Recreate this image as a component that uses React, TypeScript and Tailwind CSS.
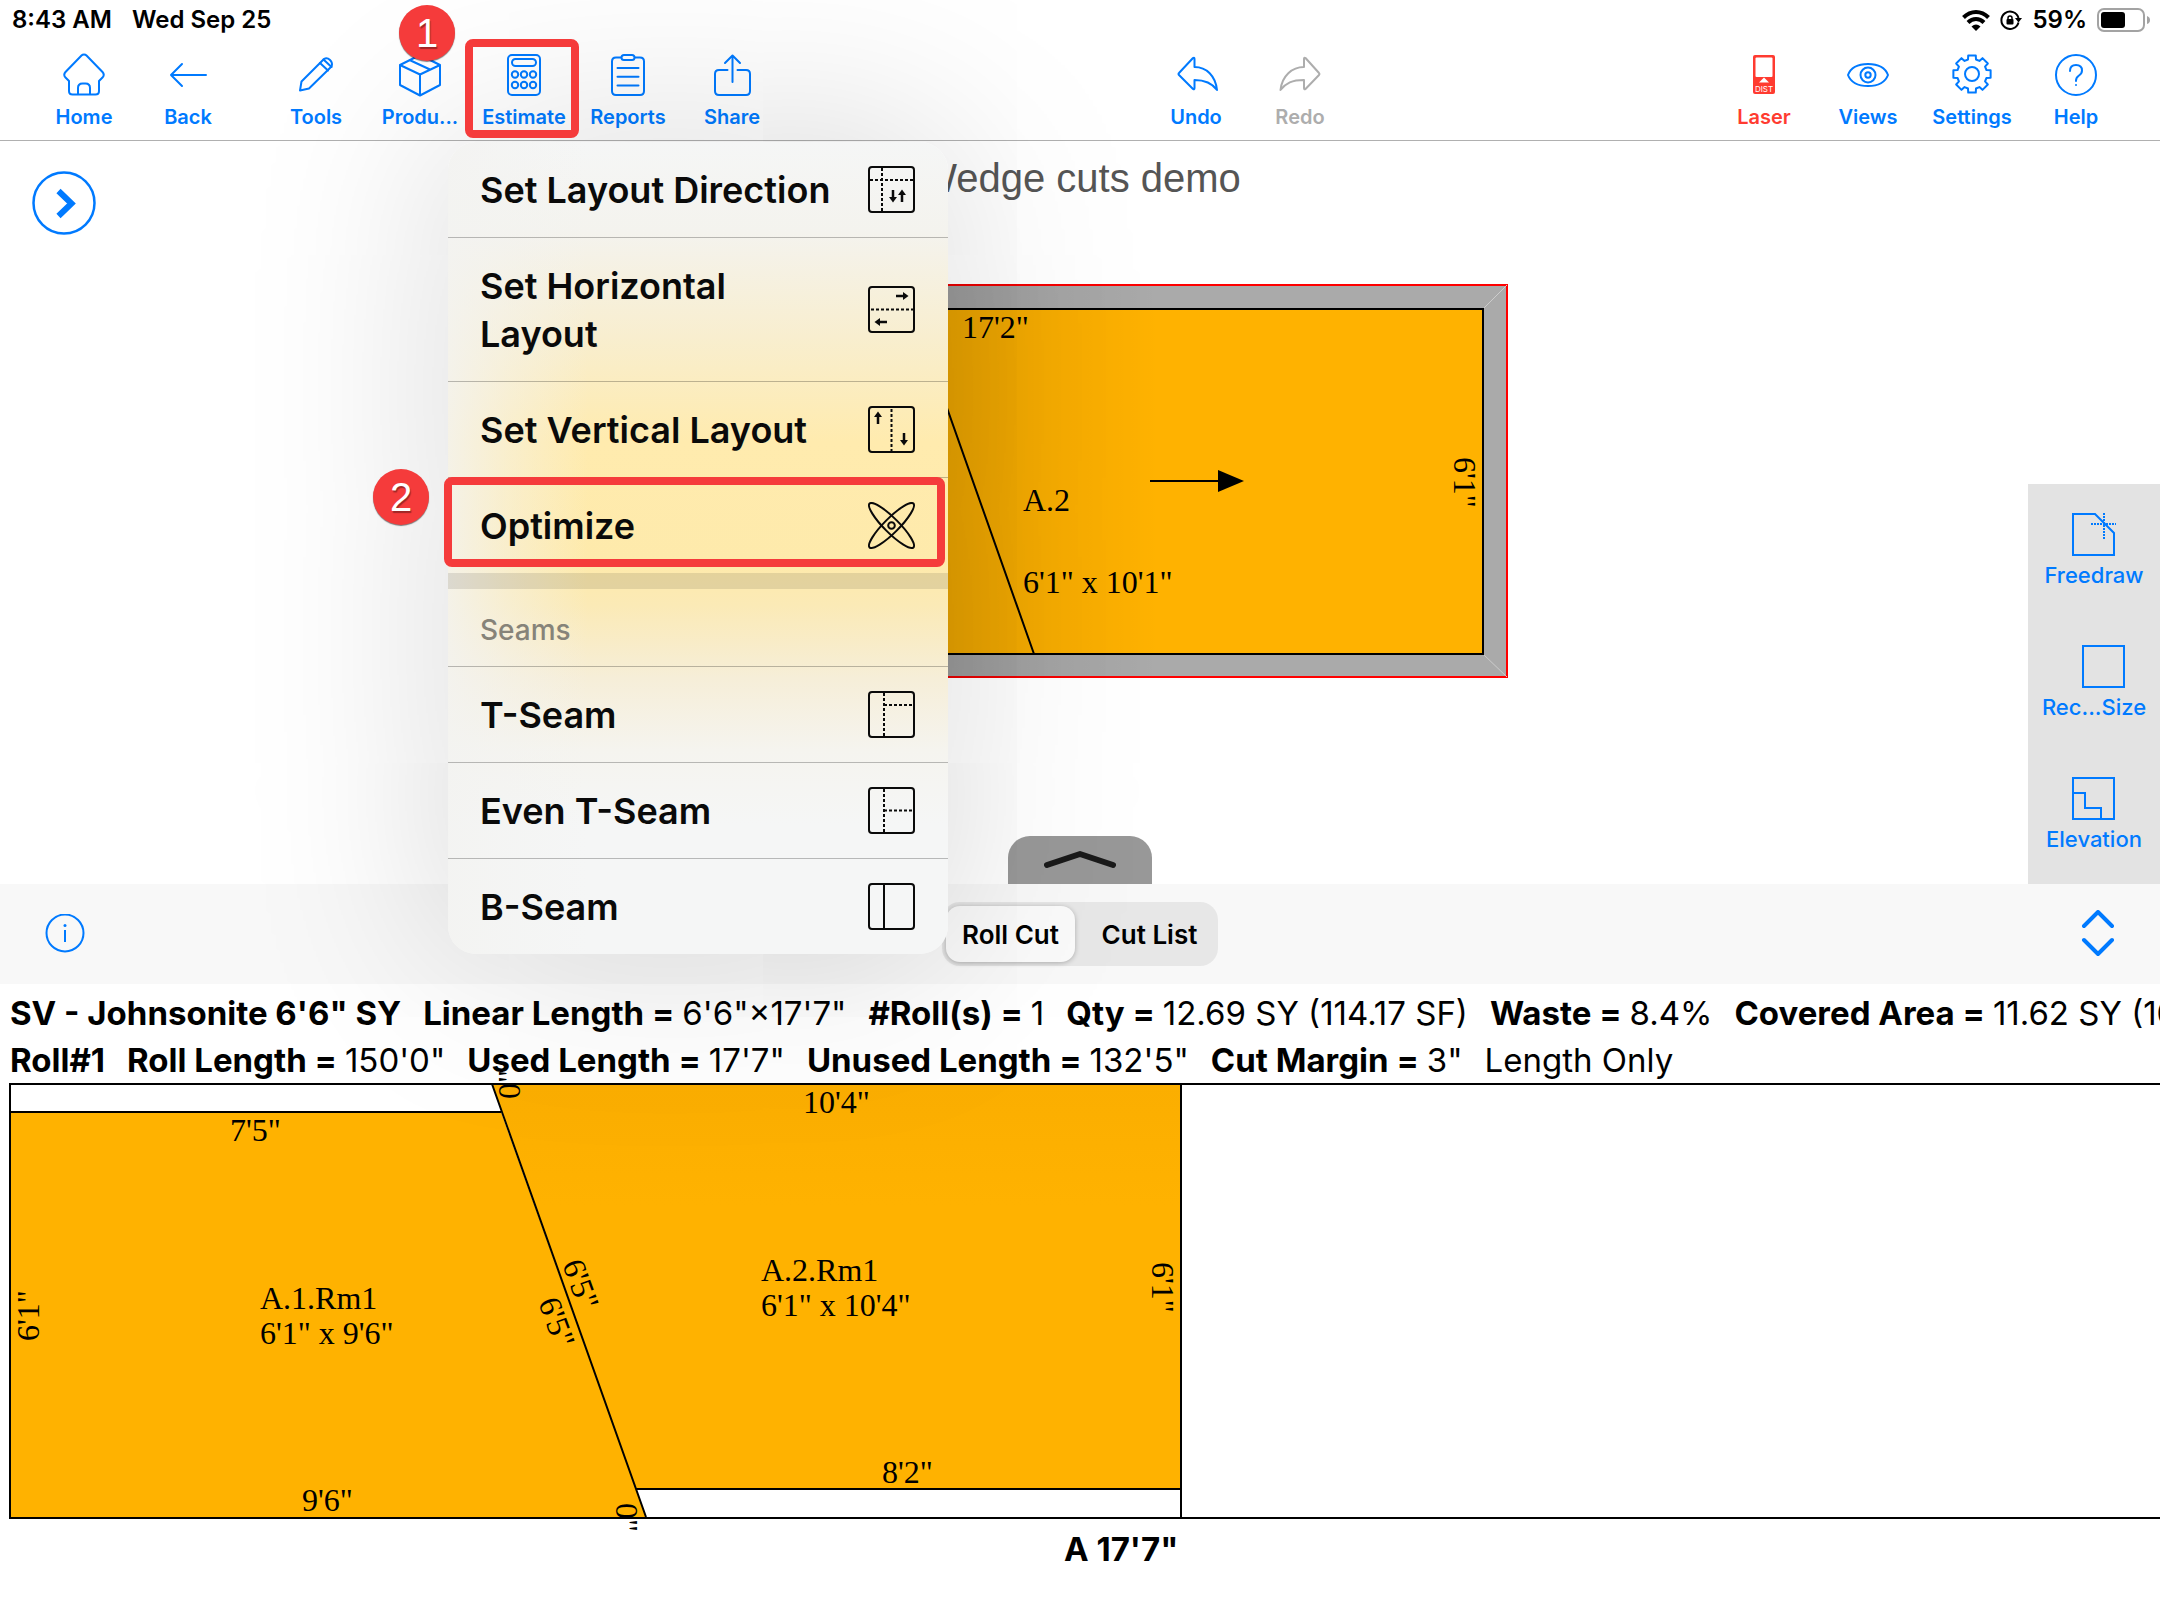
import React, { useState } from 'react';

interface IconProps {
    children: React.ReactNode;
    className?: string;
}

const ToolIcon: React.FC<IconProps> = ({ children, className = '' }) => (
    <svg
        viewBox="0 0 42 42"
        className={`h-[42px] w-[42px] overflow-visible ${className}`}
        fill="none"
        stroke="currentColor"
        strokeWidth="2"
        strokeLinejoin="round"
        strokeLinecap="round"
    >
        {children}
    </svg>
);

// Eight-toothed gear outline centred on 21,20
const gearPath = () => {
    const points: string[] = [];
    for (let i = 0; i < 8; i++) {
        const mid = (i * Math.PI) / 4 - Math.PI / 2;
        const corners = [[15, -0.27], [19, -0.2], [19, 0.2], [15, 0.27]];
        corners.forEach(([r, a]) => {
            points.push(`${(21 + r * Math.cos(mid + a)).toFixed(2)} ${(20 + r * Math.sin(mid + a)).toFixed(2)}`);
        });
    }
    return `M${points.join('L')}Z`;
};

const HomeIcon = () => (
    <ToolIcon>
        <path d="M21 .5q-1.500 0-2.500 1L2.500 18q-2.500 3 0 5.500L6 27v10q0 3.500 3.500 3.500h23q3.500 0 3.500-3.500V27l3.500-3.500q2.500-2.500 0-5.500l-16-16.500q-1-1-2.500-1z" />
        <path d="M15 40v-6q0-4.500 4.500-4.500h3q4.500 0 4.500 4.500v6" />
    </ToolIcon>
);

const BackIcon = () => (
    <ToolIcon>
        <path d="M4 21h35M15 10L4 21l11 11" />
    </ToolIcon>
);

const PencilIcon = () => (
    <ToolIcon>
        <path d="M5 36.500l1.500-9L29 5q3-2 6 1t1.500 6.500L14 34.500z" />
        <path d="M25 9l8 7.500M28.500 5.500l8 7.500" />
    </ToolIcon>
);

const BoxIcon = () => (
    <ToolIcon>
        <path d="M21 1l20 10v20L21 41.500 1 31V11zM1 11l20 9.500L41 11M21 20.500v21M10.500 6L31 15.500" />
    </ToolIcon>
);

const CalculatorIcon = () => (
    <ToolIcon>
        <rect x="5" y="1" width="32" height="40" rx="4" />
        <rect x="9" y="5" width="24" height="7" rx="3.500" />
        {[12, 21, 30].map((x) => (
            <React.Fragment key={x}>
                <circle cx={x} cy="20.500" r="3.200" />
                <circle cx={x} cy="31" r="3.200" />
            </React.Fragment>
        ))}
    </ToolIcon>
);

const ReportsIcon = () => (
    <ToolIcon>
        <path d="M14 3.500H9q-4 0-4 4V37q0 4 4 4h24q4 0 4-4V7.500q0-4-4-4h-5" />
        <rect x="14.500" y="1" width="13" height="5" rx="2.500" />
        <path d="M10.500 14h21M10.500 22.700h21M10.500 31.500h21" />
    </ToolIcon>
);

const ShareIcon = () => (
    <ToolIcon>
        <path d="M16.500 16H8q-4 0-4 4v17q0 4 4 4h27q4 0 4-4V20q0-4-4-4h-8.500M21.500 28V1.500M14 9l7.500-7.500L29 9" />
    </ToolIcon>
);

const UndoIcon = () => (
    <ToolIcon>
        <path d="M4 19L18 4q1.500-1 1.500 1v8c12 0 21 9 22.500 23-5-7-11.500-10-22.500-10v8q0 2-1.500 1L4 21q-1-1 0-2z" />
    </ToolIcon>
);

const RedoIcon = () => (
    <ToolIcon>
        <path d="M40 19L26.500 4q-1.500-1-1.500 1v8C13 13 3 22 1.500 36 7 29 13 26 25 26v8q0 2 1.500 1L40 21q1-1 0-2z" />
    </ToolIcon>
);

const LaserIcon = () => (
    <ToolIcon>
        <rect x="10" y="1" width="22" height="39" rx="2" fill="currentColor" stroke="none" />
        <rect x="12.500" y="3.500" width="17" height="19.500" rx="1" fill="#fff" stroke="none" />
        <path d="M16 28.500l5-5 5 5z" fill="#fff" stroke="none" />
        <text x="21" y="37.500" fontSize="8" textAnchor="middle" fill="#fff" stroke="none">DIST</text>
    </ToolIcon>
);

const ViewsIcon = () => (
    <ToolIcon>
        <path d="M1 21C4 13 12 10 21 10s17 3 20 11c-3 8-11 11-20 11S4 29 1 21z" />
        <circle cx="21" cy="21" r="7.500" />
        <circle cx="21" cy="21" r="2.700" />
    </ToolIcon>
);

const SettingsIcon = () => (
    <ToolIcon>
        <path d={gearPath()} />
        <circle cx="21" cy="20" r="7" />
    </ToolIcon>
);

const HelpIcon = () => (
    <ToolIcon>
        <circle cx="21" cy="21" r="20" />
        <path d="M15 17q0-6 6-6t6 5.500q0 3-3 5t-3 5v.5" />
        <circle cx="21" cy="31" r="1" fill="currentColor" stroke="none" />
    </ToolIcon>
);

interface ToolButtonProps {
    label: string;
    icon: React.ReactNode;
    color?: string;
    disabled?: boolean;
}

const ToolButton: React.FC<ToolButtonProps> = ({ label, icon, color = 'text-[#007aff]', disabled }) => (
    <button disabled={disabled} className={`flex w-[104px] flex-col items-center gap-[9px] pt-[14px] ${color}`}>
        {icon}
        <span className="text-[20px] leading-6 font-semibold">{label}</span>
    </button>
);

const MenuIcon: React.FC<{ children?: React.ReactNode; framed?: boolean }> = ({ children, framed = true }) => (
    <svg viewBox="0 0 48 48" className="h-12 w-12 shrink-0" fill="none" stroke="currentColor" strokeWidth="2">
        {framed && <rect x="1" y="1" width="45" height="45" rx="3" />}
        {children}
    </svg>
);

const Arrow: React.FC<{ x: number; y: number; angle: number }> = ({ x, y, angle }) => (
    <g transform={`translate(${x} ${y}) rotate(${angle})`}>
        <path d="M-6 0H3" strokeWidth="2.500" />
        <path d="M1-4l5.500 4L1 4z" fill="currentColor" stroke="none" />
    </g>
);

const MenuItem: React.FC<{ label: string; icon: React.ReactNode; last?: boolean; children?: React.ReactNode }> = ({
    label,
    icon,
    last,
    children,
}) => (
    <li className={`relative ${last ? '' : 'border-b border-black/25'}`}>
        <button role="menuitem" className="flex w-full items-center justify-between px-8 pt-6 pb-[23px] text-left">
            <span className="max-w-[366px] text-[36px] leading-[48px] font-semibold">{label}</span>
            {icon}
        </button>
        {children}
    </li>
);

const Marker: React.FC<{ label: string; className: string }> = ({ label, className }) => (
    <span
        className={`absolute z-30 flex h-14 w-14 items-center justify-center rounded-full bg-[#f53b3b] font-['Liberation_Sans',sans-serif] text-[40px] leading-none text-white shadow-[0_1px_1px_rgba(0,0,0,0.5)] [text-shadow:1px_2px_1px_rgba(0,0,0,0.35)] ${className}`}
    >
        {label}
    </span>
);

const EstimateMenu = () => (
    <div
        role="menu"
        className="absolute top-[102px] -left-6 z-20 w-[500px] rounded-[28px] bg-[linear-gradient(to_right,rgba(243,243,241,0.85),rgba(243,243,241,0.45)_12%,rgba(243,243,241,0)_28%),linear-gradient(to_bottom,#f5f6f6,#f4f3ee_11%,#f8eecf_24%,#ffebae_37%,#feeaab_52%,#fbeab6_57%,#f6eed8_66%,#f5f4ef_75%,#f5f6f6_84%)] text-[#0a0a0a] shadow-[0_0_200px_rgba(0,0,0,0.17)]"
    >
        <ul>
            <MenuItem
                label="Set Layout Direction"
                icon={
                    <MenuIcon>
                        <path d="M14 2v44M2 14h44" strokeDasharray="3 2" />
                        <Arrow x={25} y={30} angle={90} />
                        <Arrow x={34} y={30} angle={-90} />
                    </MenuIcon>
                }
            />
            <MenuItem
                label="Set Horizontal Layout"
                icon={
                    <MenuIcon>
                        <path d="M3 23.500h42" strokeDasharray="3 2" />
                        <Arrow x={34} y={10} angle={0} />
                        <Arrow x={13} y={36} angle={180} />
                    </MenuIcon>
                }
            />
            <MenuItem
                label="Set Vertical Layout"
                icon={
                    <MenuIcon>
                        <path d="M23.500 3v42" strokeDasharray="3 2" />
                        <Arrow x={10} y={12} angle={-90} />
                        <Arrow x={36} y={33} angle={90} />
                    </MenuIcon>
                }
            />
            <MenuItem
                label="Optimize"
                last
                icon={
                    <MenuIcon framed={false}>
                        <ellipse cx="23.500" cy="23.500" rx="31" ry="7.300" transform="rotate(45 23.500 23.500)" />
                        <ellipse cx="23.500" cy="23.500" rx="31" ry="7.300" transform="rotate(-45 23.500 23.500)" />
                        <circle cx="23.500" cy="23.500" r="3.300" />
                    </MenuIcon>
                }
            >
                <span className="pointer-events-none absolute -top-px -left-1 h-[90px] w-[501px] rounded-lg border-8 border-[#f53b3b]" />
                <Marker label="2" className="-top-[9px] -left-[75px]" />
            </MenuItem>
        </ul>
        <div className="h-4 bg-black/10" />
        <h2 className="border-b border-black/25 px-8 pt-[23px] pb-[18px] text-[28px] leading-9 font-medium text-[#868379]">Seams</h2>
        <ul>
            <MenuItem
                label="T-Seam"
                icon={
                    <MenuIcon>
                        <path d="M16 2v44M16 14h30" strokeDasharray="3 2" />
                    </MenuIcon>
                }
            />
            <MenuItem
                label="Even T-Seam"
                icon={
                    <MenuIcon>
                        <path d="M16 2v44M16 23.500h30" strokeDasharray="3 2" />
                    </MenuIcon>
                }
            />
            <MenuItem
                label="B-Seam"
                last
                icon={
                    <MenuIcon>
                        <path d="M16 1v45" />
                    </MenuIcon>
                }
            />
        </ul>
    </div>
);

const StatusBar = () => (
    <div className="flex h-10 items-center justify-between pr-[10px] pl-3 text-[24px] leading-none font-semibold text-black">
        <div className="flex gap-5">
            <span>8:43 AM</span>
            <span>Wed Sep 25</span>
        </div>
        <div className="flex items-center gap-[10px]">
            <svg viewBox="0 0 28 21" className="h-[21px] w-7" fill="none" stroke="currentColor" strokeWidth="4">
                <path d="M1.500 7.500Q7 2 14 2t12.500 5.500M6 12.500Q9.500 9 14 9t8 3.500" />
                <path d="M9.500 16.500Q14 12.500 18.500 16.500L14 21z" fill="currentColor" stroke="none" />
            </svg>
            <svg viewBox="0 0 22 20" className="h-5 w-[22px]" fill="none" stroke="currentColor" strokeWidth="2">
                <path d="M18.500 12.500A8.700 8.700 0 1 1 18.500 8" />
                <path d="M15 8h7l-3.500 4.500z" fill="currentColor" stroke="none" />
                <rect x="6.500" y="9" width="7" height="5.500" rx="1" fill="currentColor" stroke="none" />
                <path d="M8 9.500V8q0-2 2-2t2 2v1.500" strokeWidth="1.500" />
            </svg>
            <span>59%</span>
            <svg viewBox="0 0 53 24" className="h-6 w-[53px]">
                <rect x="1" y="1" width="46" height="22" rx="6" fill="none" stroke="#a3a3a3" strokeWidth="2" />
                <rect x="4" y="4" width="24" height="16" rx="3" fill="#000" />
                <path d="M50 8q3 1 3 4t-3 4z" fill="#a3a3a3" />
            </svg>
        </div>
    </div>
);

const Header = () => (
    <header className="border-b border-[#b0b0b0]">
        <StatusBar />
        <nav className="flex h-[100px] items-start justify-between px-8">
            <div className="flex gap-6">
                <div className="flex">
                    <ToolButton label="Home" icon={<HomeIcon />} />
                    <ToolButton label="Back" icon={<BackIcon />} />
                </div>
                <div className="flex">
                    <ToolButton label="Tools" icon={<PencilIcon />} />
                    <ToolButton label="Produ..." icon={<BoxIcon />} />
                    <div className="relative">
                        <ToolButton label="Estimate" icon={<CalculatorIcon />} />
                        <EstimateMenu />
                        <span className="pointer-events-none absolute -top-px -left-[7px] z-30 h-[99px] w-[114px] rounded-lg border-8 border-[#f53b3b]" />
                        <Marker label="1" className="-top-[35px] -left-[73px]" />
                    </div>
                    <ToolButton label="Reports" icon={<ReportsIcon />} />
                    <ToolButton label="Share" icon={<ShareIcon />} />
                </div>
            </div>
            <div className="flex">
                <ToolButton label="Undo" icon={<UndoIcon />} />
                <ToolButton label="Redo" icon={<RedoIcon />} color="text-[#adadad]" disabled />
            </div>
            <div className="flex">
                <ToolButton label="Laser" icon={<LaserIcon />} color="text-[#ff3b30]" />
                <ToolButton label="Views" icon={<ViewsIcon />} />
                <ToolButton label="Settings" icon={<SettingsIcon />} />
                <ToolButton label="Help" icon={<HelpIcon />} />
            </div>
        </nav>
    </header>
);

const RoomPlan = () => (
    <svg className="absolute inset-0 h-full w-full font-['Liberation_Serif',serif] text-[32px]">
        <defs>
            <linearGradient id="shade" gradientUnits="userSpaceOnUse" x1="948" y1="0" x2="1160" y2="0">
                <stop offset="0" stopOpacity="0.11" />
                <stop offset="0.5" stopOpacity="0.04" />
                <stop offset="1" stopOpacity="0" />
            </linearGradient>
        </defs>
        <rect x="486" y="144" width="1021" height="392" fill="#aaaaaa" stroke="#ff0000" strokeWidth="2" />
        <path d="M1483 168l24-24M1483 513l24 23" stroke="#cccccc" />
        <rect x="510" y="168" width="973" height="345" fill="#ffb200" stroke="#000" strokeWidth="2" />
        <path d="M912 168l122 345M1150 340h70" stroke="#000" strokeWidth="2" />
        <path d="M1218 329l26 11-26 11z" />
        <text x="962" y="197">17'2"</text>
        <text x="1023" y="370">A.2</text>
        <text x="1023" y="452">6'1" x 10'1"</text>
        <text transform="translate(1454 316) rotate(90)">6'1"</text>
        <rect x="948" y="143" width="212" height="394" fill="url(#shade)" />
    </svg>
);

const SidePanel = () => (
    <aside className="absolute right-0 bottom-0 flex h-[400px] w-[132px] flex-col gap-14 bg-[#e3e3e3] pt-[29px] text-[#007aff]">
        <button className="flex flex-col items-center">
            <svg viewBox="0 0 44 44" className="h-11 w-11" fill="none" stroke="currentColor" strokeWidth="2">
                <path d="M1 1h22l19 19v22H1z" />
                <path d="M19 11h25M32 0v26" strokeDasharray="2 1" />
            </svg>
            <span className="mt-1 text-[22px] leading-7 font-medium whitespace-nowrap">Freedraw</span>
        </button>
        <button className="flex flex-col items-center">
            <svg viewBox="0 0 64 44" className="h-11 w-16" fill="none" stroke="currentColor" strokeWidth="2">
                <rect x="21" y="1" width="41" height="41" />
            </svg>
            <span className="mt-1 text-[22px] leading-7 font-medium whitespace-nowrap">Rec...Size</span>
        </button>
        <button className="flex flex-col items-center">
            <svg viewBox="0 0 44 44" className="h-11 w-11" fill="none" stroke="currentColor" strokeWidth="2">
                <path d="M1 1h41v41H1zM1 16h12v15h16v11" />
            </svg>
            <span className="mt-1 text-[22px] leading-7 font-medium whitespace-nowrap">Elevation</span>
        </button>
    </aside>
);

const Canvas = () => (
    <main className="relative h-[743px] px-8 pt-[15px]">
        <RoomPlan />
        <h1 className="text-center font-['Liberation_Sans',sans-serif] text-[40px] leading-[44px] text-[#555555]">Wedge cuts demo</h1>
        <button aria-label="Expand" className="absolute top-[30px] left-8 text-[#007aff]">
            <svg viewBox="0 0 64 64" className="h-16 w-16" fill="none" stroke="currentColor">
                <circle cx="32" cy="32" r="30.500" strokeWidth="2.500" />
                <path d="M26.500 20L39.500 32.500 26.500 45" strokeWidth="6" />
            </svg>
        </button>
        <div className="absolute inset-x-0 bottom-0 flex justify-center">
            <button aria-label="Expand panel" className="flex h-12 w-36 justify-center rounded-t-[22px] bg-[#989898] pt-[14px]">
                <svg viewBox="0 0 72 20" className="h-5 w-[72px]" fill="none" stroke="#1a1a1a" strokeWidth="6" strokeLinecap="round" strokeLinejoin="round">
                    <path d="M3 15L36 4l33 11" />
                </svg>
            </button>
        </div>
        <SidePanel />
    </main>
);

const tabs = ['Roll Cut', 'Cut List'];

const ControlBar = () => {
    const [active, setActive] = useState('Roll Cut');

    return (
        <div className="flex h-[100px] items-center justify-between bg-[#f8f8f8] px-[45px] text-[#007aff]">
            <button aria-label="Info">
                <svg viewBox="0 0 40 40" className="h-10 w-10" fill="none" stroke="currentColor" strokeWidth="2">
                    <circle cx="20" cy="19" r="18.500" />
                    <path d="M20 16v12" />
                    <circle cx="20" cy="11.500" r="1.500" fill="currentColor" stroke="none" />
                </svg>
            </button>
            <div className="flex h-16 w-[276px] gap-[10px] rounded-[18px] bg-[#e7e7e7] p-1">
                {tabs.map((tab) => (
                    <button
                        key={tab}
                        onClick={() => setActive(tab)}
                        className={`flex-1 rounded-[14px] text-[26px] font-semibold whitespace-nowrap text-black ${
                            active === tab ? 'bg-[#fafafa] shadow-[0_1px_5px_rgba(0,0,0,0.25)]' : ''
                        }`}
                    >
                        {tab}
                    </button>
                ))}
            </div>
            <button aria-label="Resize panel">
                <svg viewBox="-6 0 40 48" className="h-12 w-10" fill="none" stroke="currentColor" strokeWidth="4" strokeLinecap="round" strokeLinejoin="round">
                    <path d="M3 16L17 2l14 14M3 30l14 14 14-14" />
                </svg>
            </button>
        </div>
    );
};

interface Stat {
    name: string;
    value?: string;
}

const StatLine: React.FC<{ stats: Stat[]; note?: string }> = ({ stats, note }) => (
    <dl className="flex gap-[22px] overflow-hidden text-[33px] leading-[47px] whitespace-nowrap">
        {stats.map(({ name, value }) => (
            <div key={name} className="flex gap-2">
                <dt className="font-bold">
                    {name}
                    {value && ' ='}
                </dt>
                {value && <dd>{value}</dd>}
            </div>
        ))}
        {note && <div>{note}</div>}
    </dl>
);

const RollPlan = () => (
    <svg className="block h-[536px] w-full overflow-visible font-['Liberation_Serif',serif] text-[32px]">
        <defs>
            <linearGradient id="rollShade" x1="0" y1="0" x2="0" y2="1">
                <stop offset="0" stopColor="#fbae00" />
                <stop offset="0.3" stopColor="#ffb200" />
            </linearGradient>
        </defs>
        <path d="M10 28h491L646 433H10z" fill="#ffb200" />
        <path d="M492 0h689v405H636z" fill="url(#rollShade)" />
        <g stroke="#000" strokeWidth="2" fill="none">
            <path d="M10 0v433M10 28h491M492 0l154 433M636 405h545M1181 0v433" />
            <path d="M9 0h5000M9 434h5000" />
        </g>
        <text x="230" y="57">7'5"</text>
        <text x="302" y="427">9'6"</text>
        <text x="260" y="225">A.1.Rm1</text>
        <text x="260" y="260">6'1" x 9'6"</text>
        <text x="803" y="29">10'4"</text>
        <text x="882" y="399">8'2"</text>
        <text x="761" y="197">A.2.Rm1</text>
        <text x="761" y="232">6'1" x 10'4"</text>
        <text transform="translate(39 257) rotate(-90)">6'1"</text>
        <text transform="translate(1152 178) rotate(90)">6'1"</text>
        <text transform="translate(562 180) rotate(70)">6'5"</text>
        <text transform="translate(538 218) rotate(70)">6'5"</text>
        <text transform="translate(520 15) rotate(-90)">0"</text>
        <text transform="translate(616 419) rotate(90)">0"</text>
        <text x="1064" y="477" className="font-['Inter',sans-serif] text-[33px] font-bold">A 17'7"</text>
    </svg>
);

const RollSection = () => (
    <section className="overflow-hidden bg-white pt-[6px] text-black">
        <div className="pl-[10px]">
            <StatLine
                stats={[
                    { name: 'SV - Johnsonite 6\'6" SY' },
                    { name: 'Linear Length', value: '6\'6"×17\'7"' },
                    { name: '#Roll(s)', value: '1' },
                    { name: 'Qty', value: '12.69 SY (114.17 SF)' },
                    { name: 'Waste', value: '8.4%' },
                    { name: 'Covered Area', value: '11.62 SY (104.58 SF)' },
                ]}
            />
            <StatLine
                stats={[
                    { name: 'Roll#1' },
                    { name: 'Roll Length', value: '150\'0"' },
                    { name: 'Used Length', value: '17\'7"' },
                    { name: 'Unused Length', value: '132\'5"' },
                    { name: 'Cut Margin', value: '3"' },
                ]}
                note="Length Only"
            />
        </div>
        <RollPlan />
    </section>
);

export default function App() {
    return (
        <div className="overflow-x-clip bg-white font-['Inter',sans-serif]">
            <Header />
            <Canvas />
            <ControlBar />
            <RollSection />
        </div>
    );
}
